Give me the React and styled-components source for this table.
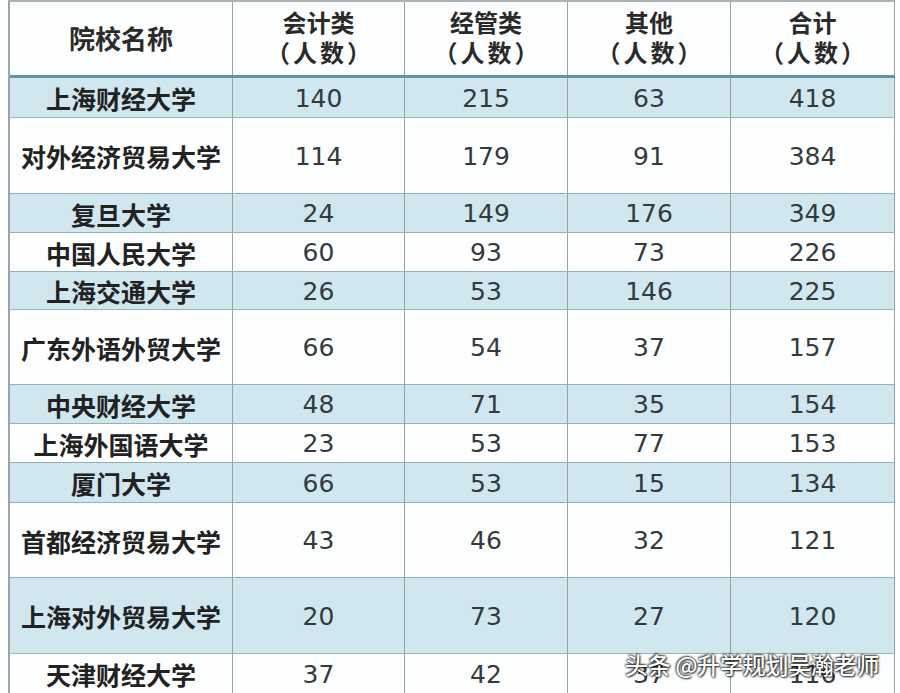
import styled, { createGlobalStyle } from "styled-components";

const GlobalStyle = createGlobalStyle`
  html, body {
    margin: 0;
    padding: 0;
    background: #ffffff;
    overflow: hidden;
  }
  body {
    font-family: "Noto Sans CJK SC", "Noto Sans", sans-serif;
  }
`;

const columns = [
  { title: "会计类", unit: "（人数）" },
  { title: "经管类", unit: "（人数）" },
  { title: "其他", unit: "（人数）" },
  { title: "合计", unit: "（人数）" },
];

// h: 行高(含下边框)
const rows = [
  { name: "上海财经大学", v: [140, 215, 63, 418], h: 40, shaded: true },
  { name: "对外经济贸易大学", v: [114, 179, 91, 384], h: 76 },
  { name: "复旦大学", v: [24, 149, 176, 349], h: 39, shaded: true },
  { name: "中国人民大学", v: [60, 93, 73, 226], h: 39 },
  { name: "上海交通大学", v: [26, 53, 146, 225], h: 38, shaded: true },
  { name: "广东外语外贸大学", v: [66, 54, 37, 157], h: 75 },
  { name: "中央财经大学", v: [48, 71, 35, 154], h: 39, shaded: true },
  { name: "上海外国语大学", v: [23, 53, 77, 153], h: 39 },
  { name: "厦门大学", v: [66, 53, 15, 134], h: 40, shaded: true },
  { name: "首都经济贸易大学", v: [43, 46, 32, 121], h: 75 },
  { name: "上海对外贸易大学", v: [20, 73, 27, 120], h: 76, shaded: true },
  { name: "天津财经大学", v: [37, 42, 37, 116], h: 40 },
];

export default function App() {
  return (
    <Page>
      <GlobalStyle />
      <Table>
        <HeaderRow>
          <HeadCell>院校名称</HeadCell>
          {columns.map((c) => (
            <HeadCell key={c.title}>
              <span>{c.title}</span>
              <Unit>{c.unit}</Unit>
            </HeadCell>
          ))}
        </HeaderRow>
        {rows.map((r) => (
          <Row key={r.name} $h={r.h} $shaded={r.shaded}>
            <NameCell>{r.name}</NameCell>
            {r.v.map((n, i) => (
              <NumCell key={i}>{n}</NumCell>
            ))}
          </Row>
        ))}
      </Table>
      <Watermark>头条 @升学规划吴瀚老师</Watermark>
    </Page>
  );
}

const Page = styled.div`
  position: relative;
  width: 900px;
  height: 693px;
  overflow: hidden;
  background: #ffffff;
`;

const Table = styled.div`
  margin-left: 8px;
  width: 887px;
  border-left: 2px solid #9aa5a8;
  border-top: 2px solid #a9b3b6;
  box-sizing: border-box;
`;

const gridCols = "223px 172px 163px 163px 164px";

const HeaderRow = styled.div`
  display: grid;
  grid-template-columns: ${gridCols};
  height: 76px;
  border-bottom: 3px solid #5d97a3;
  box-sizing: border-box;
  background: #fdfefe;
`;

const HeadCell = styled.div`
  display: flex;
  flex-direction: column;
  align-items: center;
  justify-content: center;
  border-right: 1px solid #9aa3a6;
  font-size: 24px;
  font-weight: 700;
  line-height: 30px;
  color: #2a2a2a;
  padding-bottom: 4px;

  &:first-child {
    font-size: 26px;
    padding-bottom: 2px;
  }
`;

const Unit = styled.span`
  letter-spacing: 3px;
  margin-left: 3px;
`;

const Row = styled.div`
  display: grid;
  grid-template-columns: ${gridCols};
  height: ${(p) => p.$h}px;
  box-sizing: border-box;
  border-bottom: 1px solid #95b2ba;
  background: ${(p) => (p.$shaded ? "#d0e7f0" : "#fdfefe")};
`;

const Cell = styled.div`
  display: flex;
  align-items: center;
  justify-content: center;
  border-right: 1px solid #95a3a7;
  padding-top: 1px;
`;

const NameCell = styled(Cell)`
  font-size: 25px;
  font-weight: 700;
  color: #222222;
  white-space: nowrap;
`;

const NumCell = styled(Cell)`
  font-family: "DejaVu Sans", "Liberation Sans", sans-serif;
  font-size: 25px;
  color: #333a3d;
`;

const Watermark = styled.div`
  position: absolute;
  left: 625px;
  top: 647px;
  font-size: 23px;
  font-weight: 500;
  letter-spacing: -0.3px;
  color: #ffffff;
  white-space: nowrap;
  text-shadow: 0 0 2px rgba(0, 0, 0, 0.9), 1px 1px 2px rgba(0, 0, 0, 0.8),
    -1px -1px 2px rgba(0, 0, 0, 0.6);
`;
